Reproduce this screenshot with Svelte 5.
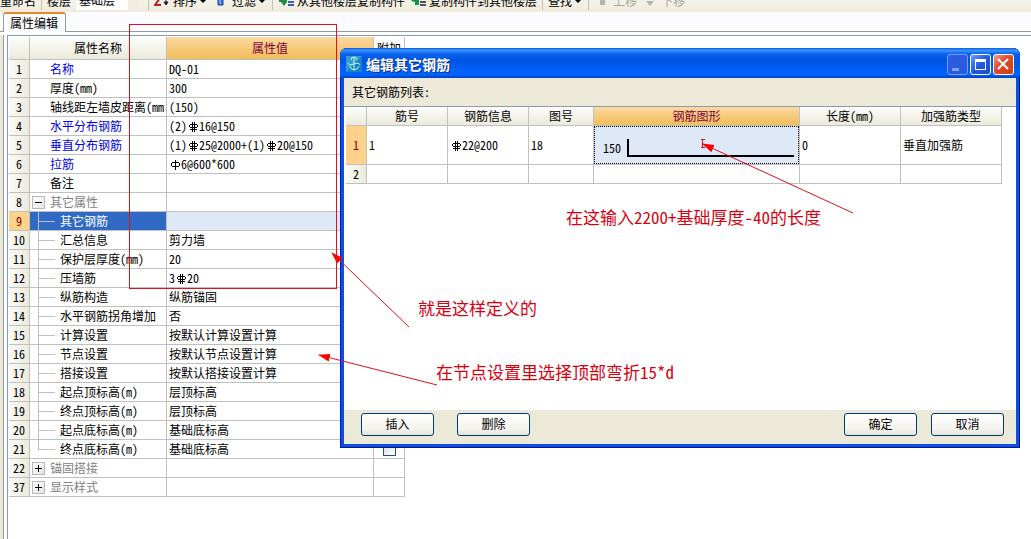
<script>
  const properties = [
    { no: 1, name: "名称", value: "DQ-01", key: true },
    { no: 2, name: "厚度(mm)", value: "300" },
    { no: 3, name: "轴线距左墙皮距离(mm", value: "(150)" },
    { no: 4, name: "水平分布钢筋", value: "(2)Φ16@150", key: true },
    { no: 5, name: "垂直分布钢筋", value: "(1)Φ25@2000+(1)Φ20@150", key: true },
    { no: 6, name: "拉筋", value: "φ6@600*600", key: true },
    { no: 7, name: "备注", value: "" },
    { no: 8, name: "其它属性", value: "", group: true, open: true },
    { no: 9, name: "其它钢筋", value: "", child: true },
    { no: 10, name: "汇总信息", value: "剪力墙", child: true },
    { no: 11, name: "保护层厚度(mm)", value: "20", child: true },
    { no: 12, name: "压墙筋", value: "3Φ20", child: true },
    { no: 13, name: "纵筋构造", value: "纵筋锚固", child: true },
    { no: 14, name: "水平钢筋拐角增加", value: "否", child: true },
    { no: 15, name: "计算设置", value: "按默认计算设置计算", child: true },
    { no: 16, name: "节点设置", value: "按默认节点设置计算", child: true },
    { no: 17, name: "搭接设置", value: "按默认搭接设置计算", child: true },
    { no: 18, name: "起点顶标高(m)", value: "层顶标高", child: true },
    { no: 19, name: "终点顶标高(m)", value: "层顶标高", child: true },
    { no: 20, name: "起点底标高(m)", value: "基础底标高", child: true },
    { no: 21, name: "终点底标高(m)", value: "基础底标高", child: true, last: true },
    { no: 22, name: "锚固搭接", value: "", group: true },
    { no: 37, name: "显示样式", value: "", group: true },
  ];

  let selected = $state(9);

  // Φ and φ stand for the steel grade marks, which are drawn as icons
  const parts = (text) => text.split(/([Φφ])/).filter(Boolean);
</script>

{#snippet rebar(text)}
  {#each parts(text) as part}
    {#if part === "Φ"}
      <svg class="grade" viewBox="0 0 12 12" role="img" aria-label="三级钢">
        <path d="M3 3.5h7M3 6.5h7M2.5 4v2M10.5 4v2M5.5 1v10M7.5 1v10M3 8.5h7" />
      </svg>
    {:else if part === "φ"}
      <svg class="grade" viewBox="0 0 12 12" role="img" aria-label="一级钢">
        <path d="M3 3.5h7M3 7.5h7M2.5 4v3M10.5 4v3M6.5 1v10" />
      </svg>
    {:else}{part}{/if}
  {/each}
{/snippet}

<div class="app">
  <div class="toolbar">
    <button class="rename">重命名</button>
    <i class="sep"></i>
    <label for="floor">楼层</label>
    <select id="floor"><option>基础层</option></select>
    <i class="sep"></i>
    <button>
      <svg width="16" height="16" viewBox="0 0 16 16">
        <path d="M1 5h5L1 12h6" fill="none" stroke="#b22" stroke-width="2" />
        <path d="M12 0v10M10 9h4l-2 3z" fill="#222" stroke="#222" />
      </svg>
      排序<b class="caret"></b>
    </button>
    <button>
      <svg width="16" height="16" viewBox="0 0 16 16">
        <path d="M5 0h5v12H5z" fill="#3a78dc" stroke="#1c3f9a" />
        <path d="M7 1v10" stroke="#a9c8f8" />
      </svg>
      过滤<b class="caret"></b>
    </button>
    <i class="sep"></i>
    <button>
      <svg width="16" height="16" viewBox="0 0 16 16">
        <path d="M1 6h8v3H1zM3 9h6l-3 4z" fill="#189048" />
        <path d="M10 6h6M10 9h6M10 12h6" stroke="#3c5fae" stroke-width="2" />
      </svg>
      从其他楼层复制构件
    </button>
    <button>
      <svg width="16" height="16" viewBox="0 0 16 16">
        <path d="M1 8l4-4v3h4v5H5V9z" fill="#189048" />
        <path d="M10 6h6M10 9h6M10 12h6" stroke="#4a5568" stroke-width="2" />
      </svg>
      复制构件到其他楼层
    </button>
    <i class="sep"></i>
    <button>查找<b class="caret"></b></button>
    <i class="sep"></i>
    <button disabled>
      <svg width="16" height="16" viewBox="0 0 16 16"><path d="M6 5h5v7H6z" fill="#b5b3aa" /></svg>
      上移
    </button>
    <button disabled>
      <svg width="16" height="16" viewBox="0 0 16 16"><path d="M4 8h8l-4 5z" fill="#b5b3aa" /></svg>
      下移
    </button>
  </div>

  <div class="tabs"><button class="tab">属性编辑</button></div>

  <main class="panel">
    <table class="grid props">
      <colgroup><col class="w-no" /><col class="w-name" /><col class="w-value" /><col class="w-extra" /></colgroup>
      <thead>
        <tr><th></th><th>属性名称</th><th class="hot">属性值</th><th class="extra">附加</th></tr>
      </thead>
      <tbody>
        {#each properties as row}
          <tr class:selected={row.no === selected} onclick={() => (selected = row.no)}>
            <th>{row.no}</th>
            <td class="name" class:key={row.key} class:group={row.group} class:child={row.child} class:last={row.last}>
              {#if row.group}<button class="fold" class:open={row.open} aria-label="展开"></button>{/if}
              {row.name}
            </td>
            <td class="value">{@render rebar(row.value)}</td>
            <td class="check">
              {#if !row.group}<input type="checkbox" aria-label={row.name} />{/if}
            </td>
          </tr>
        {/each}
      </tbody>
    </table>
  </main>

  <section class="dialog" role="dialog" aria-labelledby="dialog-title">
    <header>
      <svg class="logo" width="16" height="16" viewBox="0 0 16 16">
        <rect width="16" height="16" rx="1" fill="#2f9fd0" />
        <path d="M0 16L16 0v16z" fill="#1683c4" />
        <path d="M8 1v13M5 4q0-3 3-3t3 3M2 7q1 3 6 1t6 1M4 10q1 4 4 4t5-4" fill="none" stroke="#c9f1f7" />
      </svg>
      <h1 id="dialog-title">编辑其它钢筋</h1>
      <button class="win min" disabled aria-label="最小化">
        <svg viewBox="0 0 21 21"><path d="M5 14h7v3H5z" fill="#7fa2f2" /></svg>
      </button>
      <button class="win" aria-label="最大化">
        <svg viewBox="0 0 21 21"><path d="M5 5h11v11H5zM6 8v7h9V8z" fill="#fff" fill-rule="evenodd" /></svg>
      </button>
      <button class="win close" aria-label="关闭">
        <svg viewBox="0 0 21 21"><path d="M5 5l10 10M15 5L5 15" stroke="#fff" stroke-width="2" /></svg>
      </button>
    </header>

    <p class="caption">其它钢筋列表:</p>

    <div class="list">
      <table class="grid bars">
        <colgroup>
          <col class="w-no" /><col class="w-bar" /><col class="w-bar" /><col class="w-fig" />
          <col class="w-shape" /><col class="w-len" /><col class="w-len" />
        </colgroup>
        <thead>
          <tr>
            <th></th><th>筋号</th><th>钢筋信息</th><th>图号</th>
            <th class="hot">钢筋图形</th><th>长度(mm)</th><th>加强筋类型</th>
          </tr>
        </thead>
        <tbody>
          <tr class="current">
            <th>1</th>
            <td>1</td>
            <td>{@render rebar("Φ22@200")}</td>
            <td>18</td>
            <td class="shape">
              <div><span>150</span><i></i></div>
            </td>
            <td>0</td>
            <td>垂直加强筋</td>
          </tr>
          <tr><th>2</th><td></td><td></td><td></td><td></td><td></td><td></td></tr>
        </tbody>
      </table>
    </div>

    <footer>
      <button>插入</button>
      <button>删除</button>
      <button class="ok">确定</button>
      <button>取消</button>
    </footer>
  </section>

  <svg class="notes" width="1031" height="539">
    <defs>
      <marker id="head" markerWidth="12" markerHeight="8" refX="11" refY="4" orient="auto" markerUnits="userSpaceOnUse">
        <path d="M12 4L0 0v8z" />
      </marker>
    </defs>
    <rect x="129.5" y="24.5" width="207" height="264" />
    <path class="tip" d="M853 213L703 144" />
    <path class="tip" d="M409 327L332 253" />
    <path class="tip" d="M437 385L319 355" />
    <path d="M701 139.5h4M702.5 140v7M701 147.5h4" />
    <text x="566" y="224">在这输入2200+基础厚度-40的长度</text>
    <text x="418" y="315">就是这样定义的</text>
    <text x="436" y="379">在节点设置里选择顶部弯折15*d</text>
  </svg>
</div>

<style>
  :global(body) {
    background: #fff;
  }

  .app {
    position: relative;
    min-height: 100vh;
    display: flex;
    flex-direction: column;
    overflow: hidden;
    box-sizing: border-box;
    font: 12px/18px "Noto Sans Mono CJK SC", "Noto Sans CJK SC", sans-serif;
    color: #000;
  }

  button,
  select,
  input {
    font: inherit;
    color: inherit;
    margin: 0;
    padding: 0;
  }

  /* toolbar */
  .toolbar {
    display: flex;
    align-items: flex-end;
    gap: 5px;
    height: 12px;
    padding-bottom: 2px;
    box-sizing: border-box;
    overflow: hidden;
    white-space: nowrap;
    background: linear-gradient(#f4f2e8, #f0ebdc);
  }

  .toolbar > * {
    flex: none;
  }

  .toolbar button {
    display: flex;
    align-items: center;
    gap: 3px;
    border: 0;
    background: none;
  }

  .toolbar button:disabled {
    color: #aca899;
  }

  .toolbar select {
    width: 62px;
    height: 20px;
    margin-right: 5px;
    padding-left: 3px;
    border: 0;
    border-right: 10px solid #f0ede0;
    background: #fff;
    appearance: none;
  }

  .sep {
    width: 1px;
    height: 14px;
    background: #c5c2b2;
  }

  .caret {
    margin-right: 2px;
    border: 3px solid transparent;
    border-top-color: #000;
    border-bottom: 0;
  }

  /* tabs */
  .tabs {
    height: 19px;
    padding-left: 3px;
    border-bottom: 1px solid #919b9c;
    background: #fcfcfe;
  }

  .tab {
    display: block;
    height: 20px;
    padding: 0 7px 0 6px;
    border: 1px solid #919b9c;
    border-top: 2px solid #e68b2c;
    border-bottom: 0;
    border-radius: 3px 3px 0 0;
    background: #fcfcfe;
  }

  .panel {
    flex: 1;
    margin-top: 3px;
    margin-left: 7px;
    padding: 1px;
    border-top: 1px solid #7f9db9;
    border-left: 1px solid #7f9db9;
    box-shadow: -3px 0 #fcfcfe, -4px 0 #919b9c, -8px 0 #ece9d8;
  }

  /* grids */
  .grid {
    table-layout: fixed;
    border-collapse: separate;
    border-spacing: 0;
  }

  .grid th,
  .grid td {
    height: 18px;
    padding: 0;
    border-right: 1px solid #c0c0c0;
    border-bottom: 1px solid #c0c0c0;
    font-weight: normal;
    text-align: left;
    white-space: nowrap;
    overflow: hidden;
  }

  .grid th {
    text-align: center;
    background: linear-gradient(#fdfdfb, #ebeadb);
  }

  .grid tbody th {
    background: linear-gradient(90deg, #fbfbf8, #ebeadb);
  }

  .grid thead .hot {
    color: #800040;
    background: linear-gradient(#fbd9a0, #f2bd58);
  }

  .grid td {
    padding-left: 2px;
  }

  .props {
    width: 396px;
  }

  .props thead th {
    height: 22px;
  }

  .props thead .extra {
    background: #fff;
  }

  .w-no {
    width: 21px;
  }

  .w-name {
    width: 137px;
  }

  .w-value {
    width: 207px;
  }

  .w-extra {
    width: 31px;
  }

  .props td.name {
    position: relative;
    padding-left: 20px;
  }

  .name.key {
    color: #0000e0;
  }

  .name.group {
    color: #808080;
  }

  .props td.child {
    padding-left: 30px;
  }

  .child::before {
    content: "";
    position: absolute;
    top: 0;
    left: 8px;
    height: 19px;
    border-left: 1px solid #c0c0c0;
  }

  .child.last::before {
    height: 9px;
  }

  .child::after {
    content: "";
    position: absolute;
    top: 9px;
    left: 8px;
    width: 17px;
    border-top: 1px solid #c0c0c0;
  }

  .fold {
    position: absolute;
    top: 3px;
    left: 2px;
    width: 13px;
    height: 13px;
    border: 1px solid #b8b8b8;
    background:
      linear-gradient(#000, #000) center / 7px 1px no-repeat,
      linear-gradient(#000, #000) center / 1px 7px no-repeat,
      linear-gradient(135deg, #fff, #e4e4e4);
  }

  .fold.open {
    background:
      linear-gradient(#000, #000) center / 7px 1px no-repeat,
      linear-gradient(135deg, #fff, #e4e4e4);
  }

  .props .selected th,
  .bars .current th {
    background: #ffd28c;
    color: #800000;
  }

  .selected .name {
    background: #316ac5;
    color: #fff;
  }

  .selected .value {
    background: #dfe8f6;
  }

  .props td.check {
    padding: 0;
    text-align: center;
  }

  .check input {
    display: block;
    width: 13px;
    height: 13px;
    margin: 0 auto;
    border: 1px solid #1c5180;
    background: linear-gradient(135deg, #dcdcd7, #fff);
    appearance: none;
  }

  .grade {
    width: 12px;
    height: 12px;
    vertical-align: -2px;
    fill: none;
    stroke: #000;
  }

  /* dialog */
  .dialog {
    position: absolute;
    top: 48px;
    left: 340px;
    right: 11px;
    padding: 0 4px 4px;
    border-radius: 7px 7px 0 0;
    background: #ece9d8;
    box-shadow: inset 1px 0 #0019cf, inset -1px 0 #00138c, inset 0 -1px #00138c,
      inset 0 0 0 4px #0a4ee4;
    overflow: hidden;
  }

  .dialog header {
    display: flex;
    align-items: center;
    gap: 2px;
    height: 30px;
    margin: 0 -4px;
    padding: 2px 6px 0;
    box-sizing: border-box;
    background: linear-gradient(#0b5bdc, #3a94ff 8%, #0a62ee 20%, #0054e3 40%, #0060fa 75%, #0066ff 88%, #0040c8);
  }

  .dialog h1 {
    flex: 1;
    margin: 0 0 0 2px;
    font-size: 14px;
    font-weight: bold;
    color: #fff;
    text-shadow: 1px 1px #0a2c80;
  }

  .win {
    width: 21px;
    height: 21px;
    border: 1px solid #fff;
    border-radius: 3px;
    background: linear-gradient(135deg, #6f9bf5, #2258e0 50%, #1b4fd0);
  }

  .win svg {
    display: block;
    width: 21px;
    height: 21px;
    margin: -1px;
  }

  .win.min {
    border-color: #7a9cf0;
    background: #2a5cdf;
  }

  .win.close {
    background: linear-gradient(135deg, #f0a080, #e0502a 40%, #c83c14);
  }

  .caption {
    margin: 0;
    padding: 5px 8px;
  }

  .list {
    min-height: 303px;
    padding-left: 2px;
    border-top: 1px solid #8e9ba8;
    background: #fff;
  }

  .bars {
    width: 656px;
  }

  .w-bar {
    width: 81px;
  }

  .w-fig {
    width: 65px;
  }

  .w-shape {
    width: 206px;
  }

  .w-len {
    width: 101px;
  }

  .bars .current td {
    height: 38px;
  }

  .bars td.shape {
    padding: 0;
    background: #dfe8f6;
  }

  .shape div {
    display: flex;
    align-items: center;
    gap: 6px;
    height: 38px;
    padding: 6px 4px 0 8px;
    box-sizing: border-box;
    border: 1px dotted #000;
  }

  .shape i {
    flex: 1;
    height: 16px;
    border-left: 2px solid #000;
    border-bottom: 2px solid #000;
  }

  .dialog footer {
    display: flex;
    gap: 23px;
    padding: 3px 12px 8px 17px;
  }

  .dialog footer button {
    width: 73px;
    height: 23px;
    padding-bottom: 2px;
    border: 1px solid #003c74;
    border-radius: 3px;
    background: linear-gradient(#fff, #f4f3ee 70%, #e6e3d8);
  }

  .dialog footer .ok {
    margin-left: auto;
    margin-right: -9px;
  }

  /* annotations over the window */
  .notes {
    position: absolute;
    top: 0;
    left: 0;
    pointer-events: none;
  }

  .notes rect,
  .notes path {
    fill: none;
    stroke: #e01020;
  }

  .notes marker path {
    fill: #f00;
    stroke: none;
  }

  .notes .tip {
    marker-end: url(#head);
  }

  .notes text {
    font-size: 17px;
    font-weight: 300;
    fill: #d80010;
  }
</style>
